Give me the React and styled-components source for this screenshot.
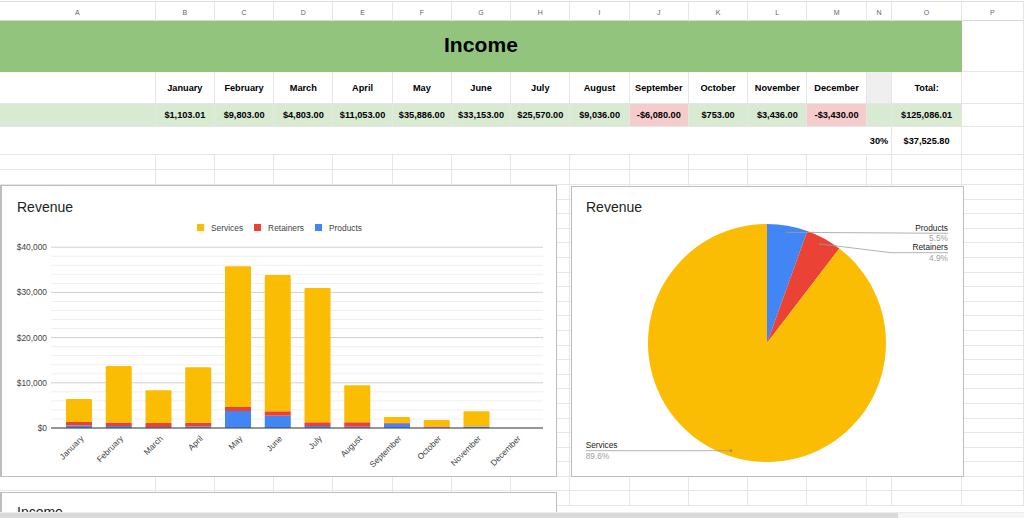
import React from "react";
import styled, { createGlobalStyle } from "styled-components";

const GlobalStyle = createGlobalStyle`
  html, body {
    margin: 0;
    padding: 0;
    background: #fff;
    overflow: hidden;
  }
  body {
    font-family: "Liberation Sans", Arial, sans-serif;
  }
`;

const COLS = "155.7px repeat(12, 59.25px) 25.6px 69.6px 1fr";

const Sheet = styled.div`
  position: relative;
  width: 1024px;
  height: 518px;
  overflow: hidden;
  padding-top: 1px;
  box-sizing: border-box;
  background: #fff;
`;

const Row = styled.div`
  display: grid;
  grid-template-columns: ${COLS};
  height: ${(p) => p.$h}px;
  border-top: ${(p) => (p.$top ? "1px solid #e0e0e0" : "none")};
  box-sizing: border-box;
`;

const Cell = styled.div`
  grid-column: ${(p) => p.$span || "auto"};
  display: flex;
  align-items: center;
  justify-content: center;
  background: ${(p) => p.$bg || "transparent"};
  border-right: 1px solid ${(p) => (p.$noRight ? "transparent" : "#e6e6e6")};
  border-bottom: 1px solid ${(p) => (p.$noBottom ? "transparent" : "#e6e6e6")};
  box-sizing: border-box;
  font-size: 9.2px;
  font-weight: 700;
  color: #000;
  white-space: nowrap;
  overflow: hidden;
`;

const ColHead = styled(Cell)`
  font-size: 7px;
  font-weight: 400;
  color: #5f6368;
  padding-top: 2px;
  border-bottom-color: #d8d8d8;
`;

const TitleCell = styled(Cell)`
  font-size: 21px;
  font-weight: 700;
  letter-spacing: 0.1px;
  border: none;
  padding-bottom: 4px;
`;

const ChartCard = styled.div`
  position: absolute;
  left: ${(p) => p.$x}px;
  top: ${(p) => p.$y}px;
  width: ${(p) => p.$w}px;
  height: ${(p) => p.$h}px;
  box-sizing: border-box;
  background: #fff;
  border: 1px solid #bdbdbd;
  border-left-width: ${(p) => p.$lw || 1}px;
  display: flex;
  flex-direction: column;
`;

const ChartTitle = styled.div`
  font-size: 14px;
  line-height: 16px;
  color: #222;
  padding: ${(p) => p.$pt}px 0 0 ${(p) => p.$pl}px;
`;

const Legend = styled.div`
  display: flex;
  justify-content: center;
  align-items: center;
  gap: 11px;
  margin-top: 8px;
  height: 9px;
  padding-left: 1px;
`;

const LegendItem = styled.div`
  display: flex;
  align-items: center;
  gap: 7px;
  font-size: 8.4px;
  color: #444;
`;

const Swatch = styled.span`
  display: block;
  width: 7px;
  height: 7px;
  background: ${(p) => p.$c};
`;

const Plot = styled.svg`
  display: block;
  flex-shrink: 0;
  margin-top: ${(p) => p.$mt || 0}px;
  font-family: "Liberation Sans", Arial, sans-serif;
`;

const Scrollbar = styled.div`
  position: absolute;
  left: 0;
  right: 0;
  bottom: 0;
  height: 5px;
  background: #f6f6f6;
  border-top: 1px solid #ececec;
`;

const Thumb = styled.div`
  width: 898px;
  height: 100%;
  background: #dadada;
`;

const YELLOW = "#fbbc04";
const RED = "#ea4335";
const BLUE = "#4285f4";

const letters = "ABCDEFGHIJKLMNOP".split("");
const months = [
  "January", "February", "March", "April", "May", "June",
  "July", "August", "September", "October", "November", "December",
];
const totals = [
  "$1,103.01", "$9,803.00", "$4,803.00", "$11,053.00", "$35,886.00", "$33,153.00",
  "$25,570.00", "$9,036.00", "-$6,080.00", "$753.00", "$3,436.00", "-$3,430.00",
];

// [services, retainers, products]
const revenue = [
  [5070, 780, 550],
  [12480, 780, 440],
  [7240, 880, 220],
  [12260, 840, 330],
  [31150, 885, 3760],
  [30150, 975, 2720],
  [29740, 820, 440],
  [8180, 975, 290],
  [1260, 220, 950],
  [1440, 220, 110],
  [3370, 0, 330],
  [0, 0, 0],
];

const BASE = 427;
const PX = 45.2 / 10000;

const BarChart = () => {
  const minor = [];
  for (let i = 0; i <= 20; i++) minor.push(BASE - i * 2000 * PX);
  return (
    <Plot $mt={5} width="555" height="238" viewBox="1 236 555 238">
      {minor.map((y, i) => (
        <line
          key={i}
          x1="50"
          x2="542"
          y1={y}
          y2={y}
          stroke={i % 5 === 0 ? "#d0d0d0" : "#efefef"}
          strokeWidth="1"
        />
      ))}
      {[0, 10000, 20000, 30000, 40000].map((v) => (
        <text
          key={v}
          x="46"
          y={BASE - v * PX}
          dy="0.35em"
          textAnchor="end"
          fontSize="8.4"
          fill="#444"
        >
          ${v.toLocaleString("en-US")}
        </text>
      ))}
      {revenue.map(([s, r, p], i) => {
        const x = 65 + i * 39.75;
        const hp = p * PX;
        const hr = r * PX;
        const hs = s * PX;
        return (
          <g key={i}>
            <rect x={x} y={BASE - hp} width="26" height={hp} fill={BLUE} />
            <rect x={x} y={BASE - hp - hr} width="26" height={hr} fill={RED} />
            <rect x={x} y={BASE - hp - hr - hs} width="26" height={hs} fill={YELLOW} rx="1" />
          </g>
        );
      })}
      <line x1="50" x2="542" y1={BASE} y2={BASE} stroke="#444" strokeWidth="1" />
      {months.map((m, i) => (
        <text
          key={m}
          transform={`translate(${81 + i * 39.75} 436) rotate(-45)`}
          textAnchor="end"
          dy="0.35em"
          fontSize="8.4"
          fill="#444"
        >
          {m}
        </text>
      ))}
    </Plot>
  );
};

const PieChart = () => (
  <Plot width="391" height="261" viewBox="572 215 391 261">
    <path d="M767 343 L767 224 A119 119 0 0 1 807.3 231 Z" fill={BLUE} />
    <path d="M767 343 L807.3 231 A119 119 0 0 1 839.3 248.5 Z" fill={RED} />
    <path d="M767 343 L839.3 248.5 A119 119 0 1 1 767 224 Z" fill={YELLOW} />

    <polyline points="786,232.3 948,233.3" fill="none" stroke="#9e9e9e" strokeWidth="0.8" />
    <circle cx="786" cy="232.3" r="1.2" fill="#888" />
    <text x="948" y="228" dy="0.35em" textAnchor="end" fontSize="8.3" fill="#222">Products</text>
    <text x="948" y="238.5" dy="0.35em" textAnchor="end" fontSize="8.3" fill="#9e9e9e">5.5%</text>

    <polyline points="820.3,244 891,252.7 948,252.7" fill="none" stroke="#9e9e9e" strokeWidth="0.8" />
    <circle cx="820.3" cy="244" r="1.2" fill="#888" />
    <text x="948" y="247.3" dy="0.35em" textAnchor="end" fontSize="8.3" fill="#222">Retainers</text>
    <text x="948" y="257.8" dy="0.35em" textAnchor="end" fontSize="8.3" fill="#9e9e9e">4.9%</text>

    <polyline points="585.7,450.7 731,450.7" fill="none" stroke="#9e9e9e" strokeWidth="0.8" />
    <circle cx="731" cy="450.7" r="1.2" fill="#888" />
    <text x="585.7" y="445" dy="0.35em" fontSize="8.3" fill="#222">Services</text>
    <text x="585.7" y="456" dy="0.35em" fontSize="8.3" fill="#9e9e9e">89.6%</text>
  </Plot>
);

const EmptyRow = ({ h }) => (
  <Row $h={h}>
    {letters.map((l) => (
      <Cell key={l} />
    ))}
  </Row>
);

const App = () => {
  const filler = Array.from({ length: 24 });
  return (
    <>
      <GlobalStyle />
      <Sheet>
        <Row $h={20} $top>
          {letters.map((l) => (
            <ColHead key={l}>{l}</ColHead>
          ))}
        </Row>

        <Row $h={51}>
          <TitleCell $span="1 / 16" $bg="#93c47d">Income</TitleCell>
          <Cell />
        </Row>

        <Row $h={32}>
          <Cell />
          {months.map((m) => (
            <Cell key={m}>{m}</Cell>
          ))}
          <Cell $bg="#efefef" />
          <Cell>Total:</Cell>
          <Cell />
        </Row>

        <Row $h={23}>
          <Cell $bg="#d9ead3" />
          {totals.map((t) => (
            <Cell key={t} $bg={t.startsWith("-") ? "#f4cccc" : "#d9ead3"}>
              {t}
            </Cell>
          ))}
          <Cell $bg="#d9ead3" />
          <Cell $bg="#d9ead3">$125,086.01</Cell>
          <Cell />
        </Row>

        <Row $h={28}>
          <Cell $span="1 / 14" $noRight />
          <Cell>30%</Cell>
          <Cell>$37,525.80</Cell>
          <Cell />
        </Row>

        {filler.map((_, i) => (
          <EmptyRow key={i} h={i < 2 ? 15 : 14.6} />
        ))}

        <ChartCard $x={0} $y={185} $w={557} $h={292} $lw={2}>
          <ChartTitle $pt={13} $pl={15}>Revenue</ChartTitle>
          <Legend>
            <LegendItem>
              <Swatch $c={YELLOW} />
              Services
            </LegendItem>
            <LegendItem>
              <Swatch $c={RED} />
              Retainers
            </LegendItem>
            <LegendItem>
              <Swatch $c={BLUE} />
              Products
            </LegendItem>
          </Legend>
          <BarChart />
        </ChartCard>

        <ChartCard $x={571} $y={186} $w={393} $h={291}>
          <ChartTitle $pt={12} $pl={14}>Revenue</ChartTitle>
          <PieChart />
        </ChartCard>

        <ChartCard $x={0} $y={492} $w={557} $h={60} $lw={2}>
          <ChartTitle $pt={11} $pl={15}>Income</ChartTitle>
        </ChartCard>

        <Scrollbar>
          <Thumb />
        </Scrollbar>
      </Sheet>
    </>
  );
};

export default App;
